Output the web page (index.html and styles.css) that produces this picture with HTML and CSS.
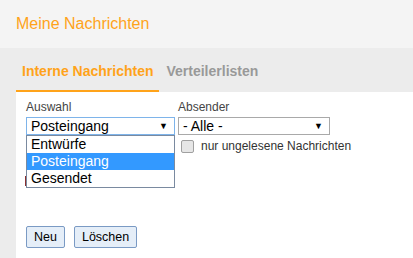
FILE: index.html
```html
<!DOCTYPE html>
<html lang="de">
<head>
    <meta charset="UTF-8">
    <title>Meine Nachrichten</title>
    <link rel="stylesheet" href="styles.css">
</head>
<body>

    <header class="page-head">
        <h1>Meine Nachrichten</h1>
    </header>

    <nav class="tabs">
        <a href="#" class="tab active">Interne Nachrichten</a>
        <a href="#" class="tab">Verteilerlisten</a>
    </nav>

    <section class="panel">
        <div class="filters">
            <div class="field">
                <label>Auswahl</label>
                <div class="select focus">
                    <span>Posteingang</span>
                    <span class="arrow">&#9660;</span>
                </div>
                <ul class="dropdown">
                    <li>Entwürfe</li>
                    <li class="selected">Posteingang</li>
                    <li>Gesendet</li>
                </ul>
                <div class="hidden-row"></div>
            </div>
            <div class="field">
                <label>Absender</label>
                <div class="select wide">
                    <span>- Alle -</span>
                    <span class="arrow">&#9660;</span>
                </div>
                <div class="check">
                    <span class="box"></span>
                    <span>nur ungelesene Nachrichten</span>
                </div>
            </div>
        </div>

        <div class="actions">
            <button>Neu</button>
            <button>Löschen</button>
        </div>
    </section>

</body>
</html>
```

FILE: styles.css
```css
body {
    font-family: "Liberation Sans", Arial, sans-serif;
    margin: 0;
    padding: 0;
    background-color: #ececec;
    height: 258px;
    overflow: hidden;
}

.page-head {
    background-color: #f4f4f4;
    height: 48px;
    padding: 0 16px;
    box-sizing: border-box;
}

.page-head h1 {
    margin: 0;
    padding-top: 13px;
    font-size: 16px;
    font-weight: normal;
    color: #ffa31a;
    line-height: 22px;
}

.tabs {
    display: flex;
    height: 44px;
    padding-left: 16px;
    box-sizing: border-box;
}

.tab {
    display: block;
    padding: 15px 6px 0 6px;
    height: 27px;
    font-size: 14px;
    font-weight: bold;
    color: #999;
    text-decoration: none;
    line-height: 17px;
}

.tab.active {
    color: #ffa31a;
    border-bottom: 2px solid #ffa31a;
    margin-right: 1px;
}

.panel {
    margin-left: 16px;
    background-color: #fff;
    height: 166px;
    padding: 8px 10px 0 10px;
}

.filters {
    display: flex;
    gap: 3px;
    height: 126px;
}

.field {
    position: relative;
}

.field label {
    display: block;
    font-size: 12px;
    color: #444;
    line-height: 15px;
    margin-bottom: 2px;
}

.select {
    display: flex;
    justify-content: space-between;
    align-items: center;
    width: 149px;
    height: 18px;
    border: 1px solid #a9a9a9;
    box-sizing: border-box;
    padding: 0 4px;
    font-size: 14px;
    color: #000;
}

.select.focus {
    border-color: #7eb4ea;
}

.select.wide {
    width: 152px;
}

.arrow {
    font-size: 9px;
    margin-right: 2px;
}

.dropdown {
    position: absolute;
    left: 0;
    top: 35px;
    width: 149px;
    margin: 0;
    padding: 0;
    list-style: none;
    background: #fff;
    border: 1px solid #7a8aa0;
    box-sizing: border-box;
    z-index: 2;
}

.dropdown li {
    font-size: 14px;
    line-height: 17px;
    padding: 0 4px;
    color: #000;
}

.dropdown li.selected {
    background-color: #3399ff;
    color: #fff;
}

.hidden-row {
    position: absolute;
    left: -1px;
    top: 76px;
    width: 1px;
    height: 10px;
    background: #8a3030;
}

.check {
    display: flex;
    align-items: center;
    gap: 7px;
    margin-top: 4px;
    padding-left: 3px;
    font-size: 12px;
    color: #333;
}

.box {
    width: 11px;
    height: 11px;
    border: 1px solid #a0a0a0;
    border-radius: 2px;
    background: #e6e6e6;
}

.actions {
    display: flex;
    gap: 9px;
}

.actions button {
    font-family: "Liberation Sans", Arial, sans-serif;
    font-size: 12.5px;
    height: 22px;
    padding: 0 7px;
    background: #e5eef8;
    border: 1px solid #7a9ac4;
    border-radius: 2px;
    color: #000;
}
```
